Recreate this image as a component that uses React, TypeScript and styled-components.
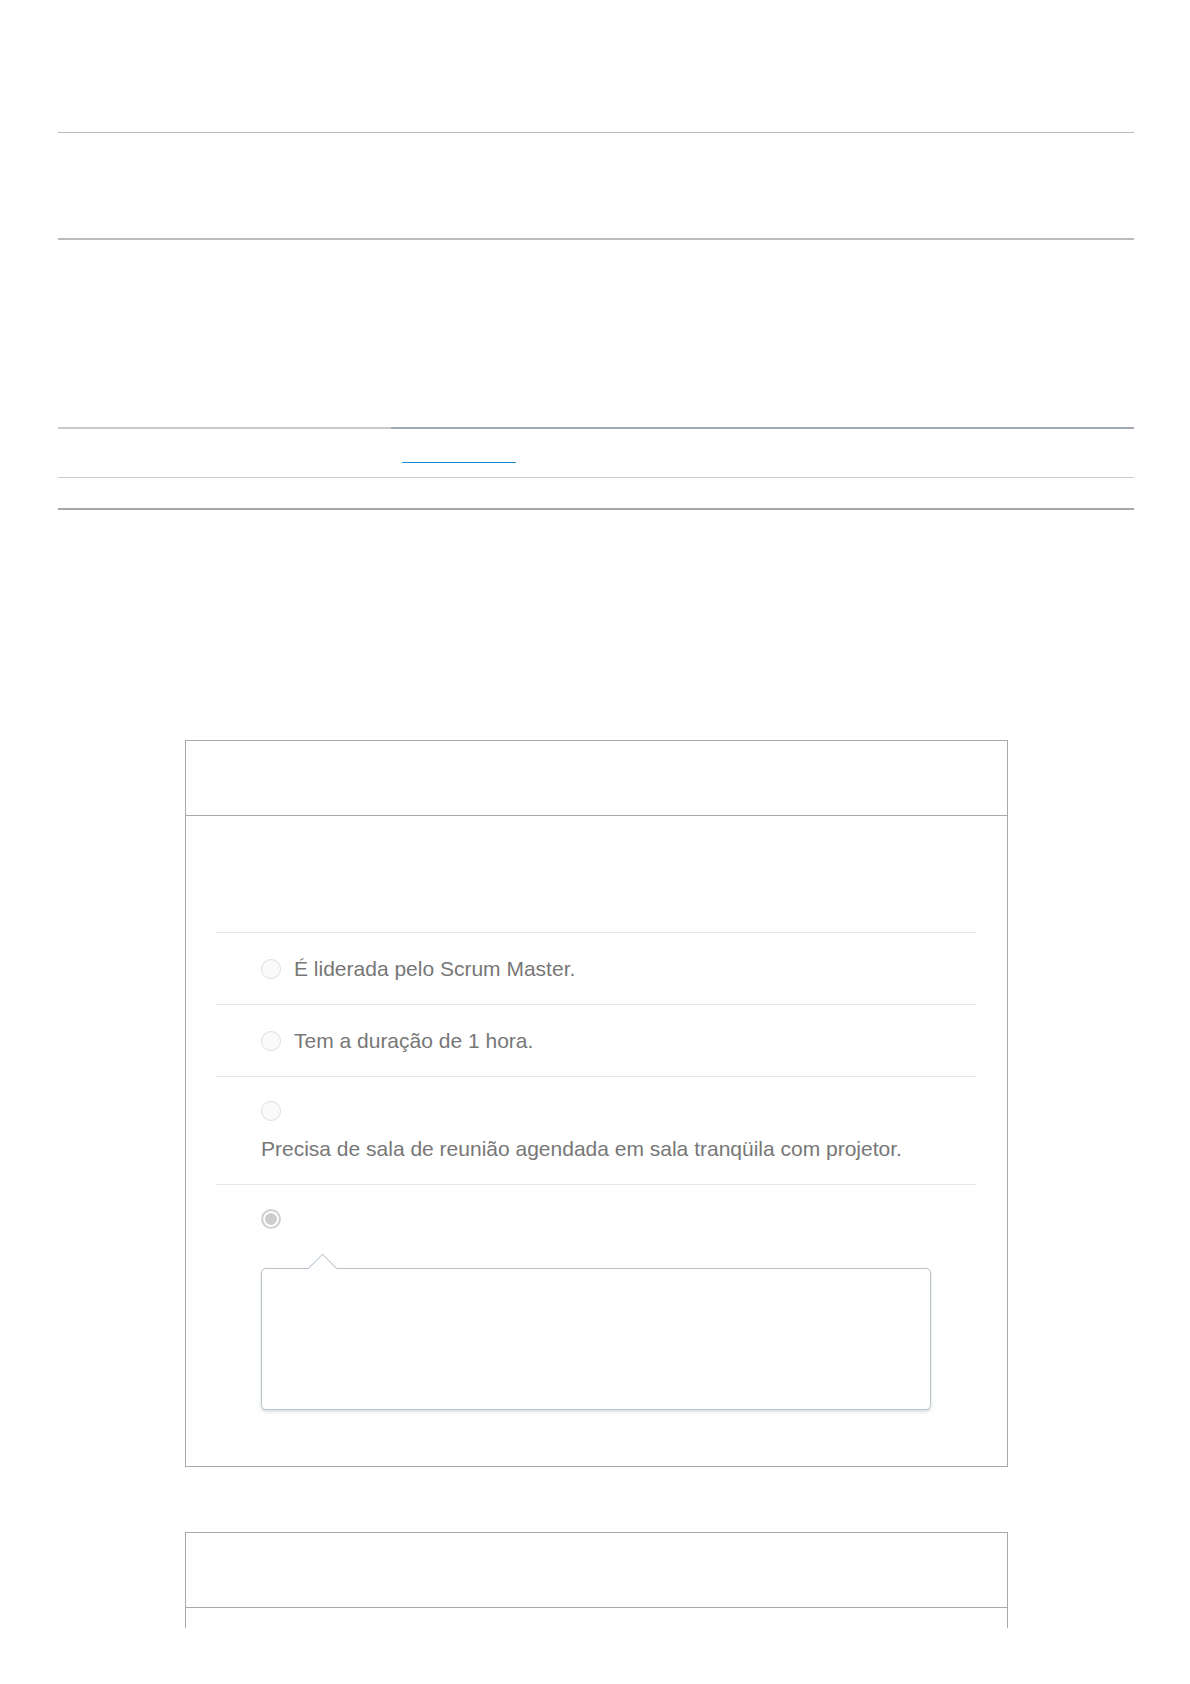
import React from "react";
import styled, { createGlobalStyle } from "styled-components";

const GlobalStyle = createGlobalStyle`
  html, body {
    margin: 0;
    padding: 0;
    background: #ffffff;
  }
  body {
    font-family: "Liberation Sans", Arial, Helvetica, sans-serif;
    color: #777777;
  }
  * { box-sizing: border-box; }
`;

const Page = styled.div`
  height: 1628px;
  overflow: hidden;
  background: #ffffff;
`;

const TopArea = styled.header`
  padding: 132px 56px 0 58px;
  display: flex;
  flex-direction: column;
`;

const Rule = styled.div<{ $w: number; $c: string }>`
  border-top: ${(p) => p.$w}px solid ${(p) => p.$c};
`;

const Spacer = styled.div<{ $h: number }>`
  height: ${(p) => p.$h}px;
`;

const TabTrack = styled.div`
  display: flex;
  height: 2px;
`;

const TabSegment = styled.div<{ $w?: number; $c: string }>`
  height: 2px;
  background: ${(p) => p.$c};
  ${(p) => (p.$w ? `width: ${p.$w}px; flex: none;` : `flex: 1;`)}
`;

const TabRow = styled.div`
  height: 48px;
  padding: 33px 0 0 344px;
`;

const LinkMark = styled.span`
  display: block;
  width: 114px;
  border-top: 1px solid #1789d4;
`;

const Main = styled.main`
  padding: 230px 0 0 185px;
  display: flex;
  flex-direction: column;
  gap: 65px;
`;

const Card = styled.section`
  width: 823px;
  border: 1px solid #a8a8a8;
  background: #fff;
`;

const CardHeader = styled.div`
  height: 75px;
  border-bottom: 1px solid #a8a8a8;
`;

const CardBody = styled.div`
  padding: 0 31px 33px 30px;
`;

const QuestionSpace = styled.div`
  height: 116px;
`;

const OptionList = styled.div`
  display: flex;
  flex-direction: column;
`;

const Option = styled.label`
  display: flex;
  flex-wrap: wrap;
  align-items: center;
  column-gap: 13px;
  row-gap: 16px;
  padding: 24px 45px 23px;
  border-top: 1px solid #e6e6e6;
  cursor: pointer;
`;

const Radio = styled.span<{ $checked?: boolean }>`
  flex: none;
  width: 20px;
  height: 20px;
  border-radius: 50%;
  ${(p) =>
    p.$checked
      ? `
    border: 2px solid #d0d0d0;
    background: #cdcdcd;
    box-shadow: inset 0 0 0 2px #ffffff;
  `
      : `
    border: 1px solid #e0e0e0;
    background: #fafafa;
  `}
`;

const OptionText = styled.span`
  font-size: 21px;
  line-height: 24px;
  color: #777777;
`;

const Popover = styled.div`
  position: relative;
  flex: 0 0 100%;
  height: 142px;
  margin-top: 23px;
  border: 1px solid #b9c3cc;
  border-radius: 5px;
  background: #ffffff;
  box-shadow: 0 2px 3px rgba(60, 70, 80, 0.18);

  &::before {
    content: "";
    position: absolute;
    top: -11px;
    left: 50px;
    width: 20px;
    height: 20px;
    background: #ffffff;
    border-top: 1px solid #b9c3cc;
    border-left: 1px solid #b9c3cc;
    transform: rotate(45deg);
  }
`;

const CutBody = styled.div`
  height: 200px;
`;

type Choice = { text?: string; checked?: boolean; feedback?: boolean };

const choices: Choice[] = [
  { text: "É liderada pelo Scrum Master." },
  { text: "Tem a duração de 1 hora." },
  { text: "Precisa de sala de reunião agendada em sala tranqüila com projetor." },
  { checked: true, feedback: true },
];

export default function App() {
  return (
    <>
      <GlobalStyle />
      <Page>
        <TopArea>
          <Rule $w={1} $c="#bbbbbb" />
          <Spacer $h={105} />
          <Rule $w={2} $c="#bbbbbb" />
          <Spacer $h={187} />
          <TabTrack>
            <TabSegment $w={333} $c="#c8cacd" />
            <TabSegment $c="#a3a9b0" />
          </TabTrack>
          <TabRow>
            <LinkMark />
          </TabRow>
          <Rule $w={1} $c="#c8cdd2" />
          <Spacer $h={30} />
          <Rule $w={2} $c="#a6a6a6" />
        </TopArea>
        <Main>
          <Card>
            <CardHeader />
            <CardBody>
              <QuestionSpace />
              <OptionList>
                {choices.map((c, i) => (
                  <Option key={i}>
                    <Radio $checked={c.checked} />
                    {c.text && <OptionText>{c.text}</OptionText>}
                    {c.feedback && <Popover />}
                  </Option>
                ))}
              </OptionList>
            </CardBody>
          </Card>
          <Card>
            <CardHeader />
            <CutBody />
          </Card>
        </Main>
      </Page>
    </>
  );
}
